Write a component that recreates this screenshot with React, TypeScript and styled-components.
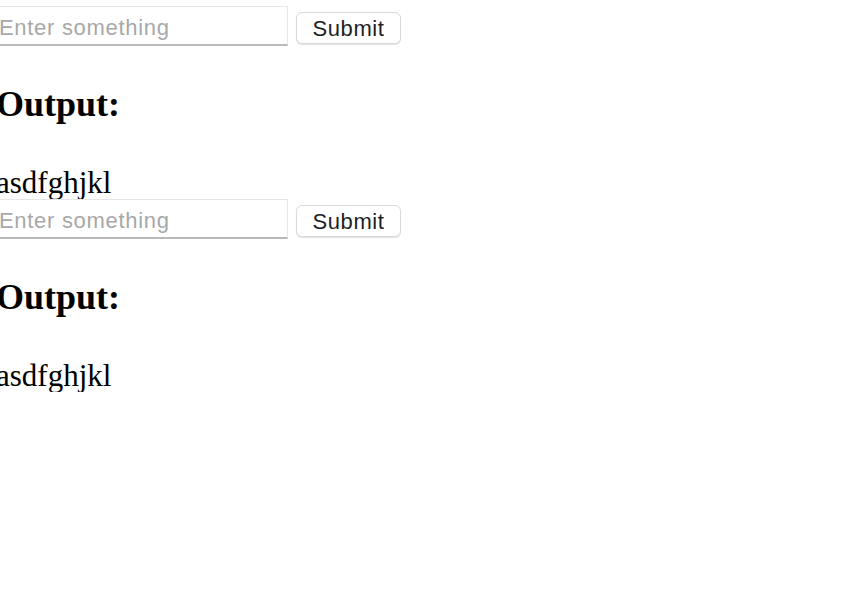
import styled, { createGlobalStyle } from "styled-components";

const GlobalStyle = createGlobalStyle`
  html, body {
    margin: 0;
    padding: 0;
    background: #ffffff;
  }
  body {
    font-family: "Liberation Serif", "Times New Roman", serif;
    color: #000000;
  }
`;

const Page = styled.div`
  display: flex;
  flex-direction: column;
  padding-top: 6px;
  margin-left: -4px;
`;

const Block = styled.section`
  display: flex;
  flex-direction: column;
  align-items: flex-start;
`;

const Form = styled.form`
  display: flex;
  align-items: center;
  gap: 8px;
  margin-bottom: 38px;
`;

const TextInput = styled.input`
  box-sizing: border-box;
  width: 292px;
  height: 40px;
  padding: 5px 2px 0;
  margin: 0;
  border: 1px solid #e6e6e6;
  border-bottom: 2px solid #b9b9b9;
  border-radius: 0;
  outline: none;
  background: #ffffff;
  font-family: "Liberation Sans", Arial, sans-serif;
  font-size: 22px;
  letter-spacing: 0.7px;
  color: #222222;

  &::placeholder {
    color: #a8a8a8;
  }
`;

const SubmitButton = styled.button`
  box-sizing: border-box;
  width: 105px;
  height: 32px;
  margin-top: 4px;
  padding: 2px 0 0;
  border: 1px solid #d9d9d9;
  border-radius: 6px;
  background: #ffffff;
  box-shadow: 0 1px 1px rgba(0, 0, 0, 0.12);
  font-family: "Liberation Sans", Arial, sans-serif;
  font-size: 22px;
  letter-spacing: 0.6px;
  color: #1e1e1e;
  cursor: pointer;
`;

const Heading = styled.h2`
  margin: 0 0 42px;
  font-size: 36px;
  line-height: 40px;
  font-weight: bold;
`;

const Output = styled.p`
  margin: 0;
  font-size: 31px;
  line-height: 33px;
`;

const entries = ["asdfghjkl", "asdfghjkl"];

export default function App() {
  return (
    <>
      <GlobalStyle />
      <Page>
        {entries.map((text, i) => (
          <Block key={i}>
            <Form onSubmit={(e) => e.preventDefault()}>
              <TextInput type="text" placeholder="Enter something" />
              <SubmitButton type="submit">Submit</SubmitButton>
            </Form>
            <Heading>Output:</Heading>
            <Output>{text}</Output>
          </Block>
        ))}
      </Page>
    </>
  );
}
